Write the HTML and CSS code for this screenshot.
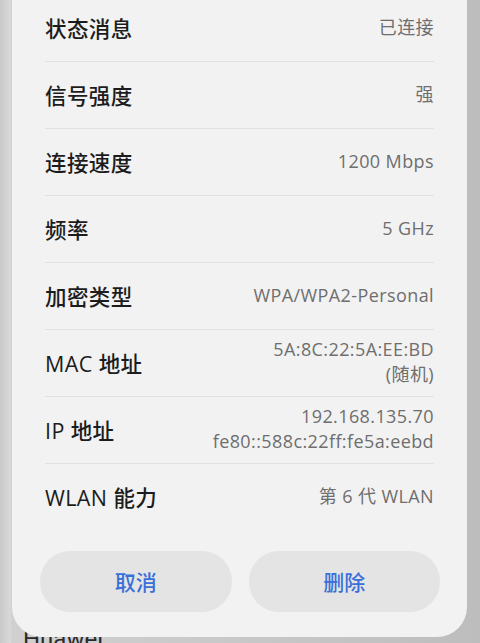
FILE: index.html
```html
<!DOCTYPE html>
<html lang="zh-CN">
<head>
<meta charset="utf-8">
<title>WLAN 详情</title>
<link rel="stylesheet" href="styles.css">
</head>
<body>
<div class="screen">
  <div class="backdrop-text">Huawei</div>
  <div class="sheet">
    <ul class="info-list">
      <li class="row"><span class="label">状态消息</span><span class="value">已连接</span></li>
      <li class="row"><span class="label">信号强度</span><span class="value">强</span></li>
      <li class="row"><span class="label">连接速度</span><span class="value">1200 Mbps</span></li>
      <li class="row"><span class="label">频率</span><span class="value">5 GHz</span></li>
      <li class="row"><span class="label">加密类型</span><span class="value">WPA/WPA2-Personal</span></li>
      <li class="row"><span class="label">MAC 地址</span><span class="value">5A:8C:22:5A:EE:BD<br>(随机)</span></li>
      <li class="row"><span class="label">IP 地址</span><span class="value">192.168.135.70<br>fe80::588c:22ff:fe5a:eebd</span></li>
      <li class="row last"><span class="label">WLAN 能力</span><span class="value">第 6 代 WLAN</span></li>
    </ul>
    <div class="actions">
      <button class="btn">取消</button>
      <button class="btn">删除</button>
    </div>
  </div>
</div>
</body>
</html>
```
FILE: styles.css
```css
html, body {
  margin: 0;
  padding: 0;
}
body {
  width: 480px;
  height: 643px;
  overflow: hidden;
  background: #c6c6c6;
  font-family: "Noto Sans CJK SC", "Noto Sans", sans-serif;
}
.screen {
  position: relative;
  width: 480px;
  height: 643px;
  overflow: hidden;
  background: linear-gradient(to right, #c9c9c9 0px, #d8d8d8 10px, #d0d0d0 12px, #c8c8c8 50%, #bdbdbd 100%);
}
.backdrop-text {
  position: absolute;
  left: 23px;
  top: 624px;
  font-size: 24px;
  line-height: 30px;
  color: #2a2a2a;
  font-family: "Roboto", "Noto Sans", sans-serif;
}
.sheet {
  position: relative;
  margin: 0 13px 0 12px;
  height: 637px;
  background: #f2f2f2;
  border-radius: 0 0 30px 30px;
  display: flex;
  flex-direction: column;
  overflow: hidden;
}
.info-list {
  list-style: none;
  margin: -5px 0 0 0;
  padding: 0 33px 0 33px;
}
.row {
  display: flex;
  justify-content: space-between;
  align-items: center;
  height: 66px;
  border-bottom: 1px solid #e1e1e1;
}
.row.last {
  border-bottom: none;
}
.label {
  font-family: "Open Sans", "Noto Sans CJK SC", sans-serif;
  font-size: 21.5px;
  font-weight: 500;
  letter-spacing: 0.4px;
  color: #1c1c1c;
  margin-top: -2px;
}
.value {
  font-family: "Open Sans", "Noto Sans CJK SC", sans-serif;
  font-size: 18px;
  font-weight: 400;
  letter-spacing: 0.4px;
  color: #6e6e6e;
  text-align: right;
  line-height: 25px;
  margin-top: -2px;
}
.actions {
  display: flex;
  gap: 17px;
  padding: 21px 27px 0 28px;
}
.btn {
  flex: 1;
  height: 61px;
  border: none;
  border-radius: 30px;
  background: #e4e4e4;
  color: #3a6fd9;
  font-family: "Noto Sans CJK SC", sans-serif;
  font-size: 21px;
  font-weight: 500;
  padding-bottom: 3px;
}
```
